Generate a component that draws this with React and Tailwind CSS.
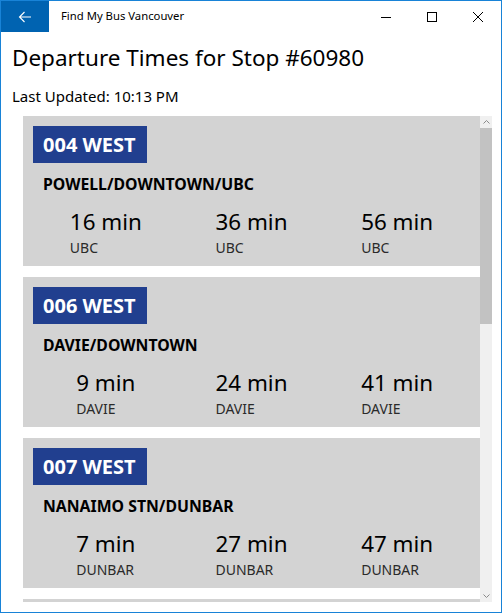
import React from 'react';

const routes = [
  {
    badge: '004 WEST',
    name: 'POWELL/DOWNTOWN/UBC',
    times: [
      { t: '16 min', d: 'UBC' },
      { t: '36 min', d: 'UBC' },
      { t: '56 min', d: 'UBC' },
    ],
  },
  {
    badge: '006 WEST',
    name: 'DAVIE/DOWNTOWN',
    times: [
      { t: '9 min', d: 'DAVIE' },
      { t: '24 min', d: 'DAVIE' },
      { t: '41 min', d: 'DAVIE' },
    ],
  },
  {
    badge: '007 WEST',
    name: 'NANAIMO STN/DUNBAR',
    times: [
      { t: '7 min', d: 'DUNBAR' },
      { t: '27 min', d: 'DUNBAR' },
      { t: '47 min', d: 'DUNBAR' },
    ],
  },
];

const RouteCard = ({ route }) => (
  <div className="h-[150px] shrink-0 bg-[#d3d3d3] p-[10px]">
    <div className="w-[114px] h-[37px] bg-[#213f8f] flex items-center pl-[10px]">
      <span className="text-white text-[20px] font-bold leading-none">{route.badge}</span>
    </div>
    <div className="mt-[11px] ml-[10px] text-[15.8px] font-bold leading-[20px] text-black">{route.name}</div>
    <div className="grid grid-cols-3 mt-[14px]">
      {route.times.map((x, i) => (
        <div key={i} className="flex justify-center">
          <div className="flex flex-col">
            <span className="text-[22.4px] leading-[28px] text-black">{x.t}</span>
            <span className="mt-[3px] text-[14px] leading-[18px] text-[#2a2a2a]">{x.d}</span>
          </div>
        </div>
      ))}
    </div>
  </div>
);

export default function App() {
  return (
    <div
      className="w-[502px] h-[613px] border border-[#1883d7] bg-white flex flex-col overflow-hidden"
      style={{ fontFamily: '"Noto Sans", "Open Sans", sans-serif' }}
    >
      {/* Title bar */}
      <div className="h-[31px] shrink-0 flex items-center">
        <div className="w-[48px] h-full bg-[#0063b1] flex items-center justify-center">
          <svg width="14" height="12" viewBox="0 0 14 12" fill="none" stroke="white" strokeWidth="1.1">
            <path d="M13 6H1.5M6.5 1L1.5 6l5 5" />
          </svg>
        </div>
        <span className="ml-[12px] text-[11.3px] text-black">Find My Bus Vancouver</span>
        <div className="ml-auto flex h-full">
          <div className="w-[46px] flex items-center justify-center">
            <svg width="10" height="10" viewBox="0 0 10 10" stroke="black" strokeWidth="1">
              <path d="M0 5.5h10" />
            </svg>
          </div>
          <div className="w-[46px] flex items-center justify-center">
            <svg width="10" height="10" viewBox="0 0 10 10" fill="none" stroke="black" strokeWidth="1">
              <rect x="0.5" y="0.5" width="9" height="9" />
            </svg>
          </div>
          <div className="w-[46px] flex items-center justify-center">
            <svg width="10" height="10" viewBox="0 0 10 10" stroke="black" strokeWidth="1">
              <path d="M0 0l10 10M10 0L0 10" />
            </svg>
          </div>
        </div>
      </div>

      {/* Header */}
      <div className="pl-[11px] pt-[10px] shrink-0">
        <h1 className="text-[22.5px] leading-[32px] text-black">Departure Times for Stop #60980</h1>
        <div className="mt-[12px] text-[15px] leading-[20px] text-black">Last Updated: 10:13 PM</div>
      </div>

      {/* List */}
      <div className="mt-[10px] ml-[22px] mr-[9px] h-[486px] shrink-0 flex">
        <div className="flex-1 flex flex-col gap-[11px] overflow-hidden">
          {routes.map((r) => (
            <RouteCard key={r.badge} route={r} />
          ))}
          <div className="h-[150px] shrink-0 bg-[#d3d3d3]" />
        </div>
        <div className="w-[12px] bg-[#f0f0f0] flex flex-col">
          <div className="h-[12px] flex items-center justify-center">
            <svg width="7" height="4" viewBox="0 0 7 4" fill="none" stroke="#8a8a8a" strokeWidth="1">
              <path d="M0.5 3.5l3-3 3 3" />
            </svg>
          </div>
          <div className="h-[196px] bg-[#c2c2c2]" />
          <div className="flex-1" />
          <div className="h-[12px] flex items-center justify-center">
            <svg width="7" height="4" viewBox="0 0 7 4" fill="none" stroke="#8a8a8a" strokeWidth="1">
              <path d="M0.5 0.5l3 3 3-3" />
            </svg>
          </div>
        </div>
      </div>
    </div>
  );
}
